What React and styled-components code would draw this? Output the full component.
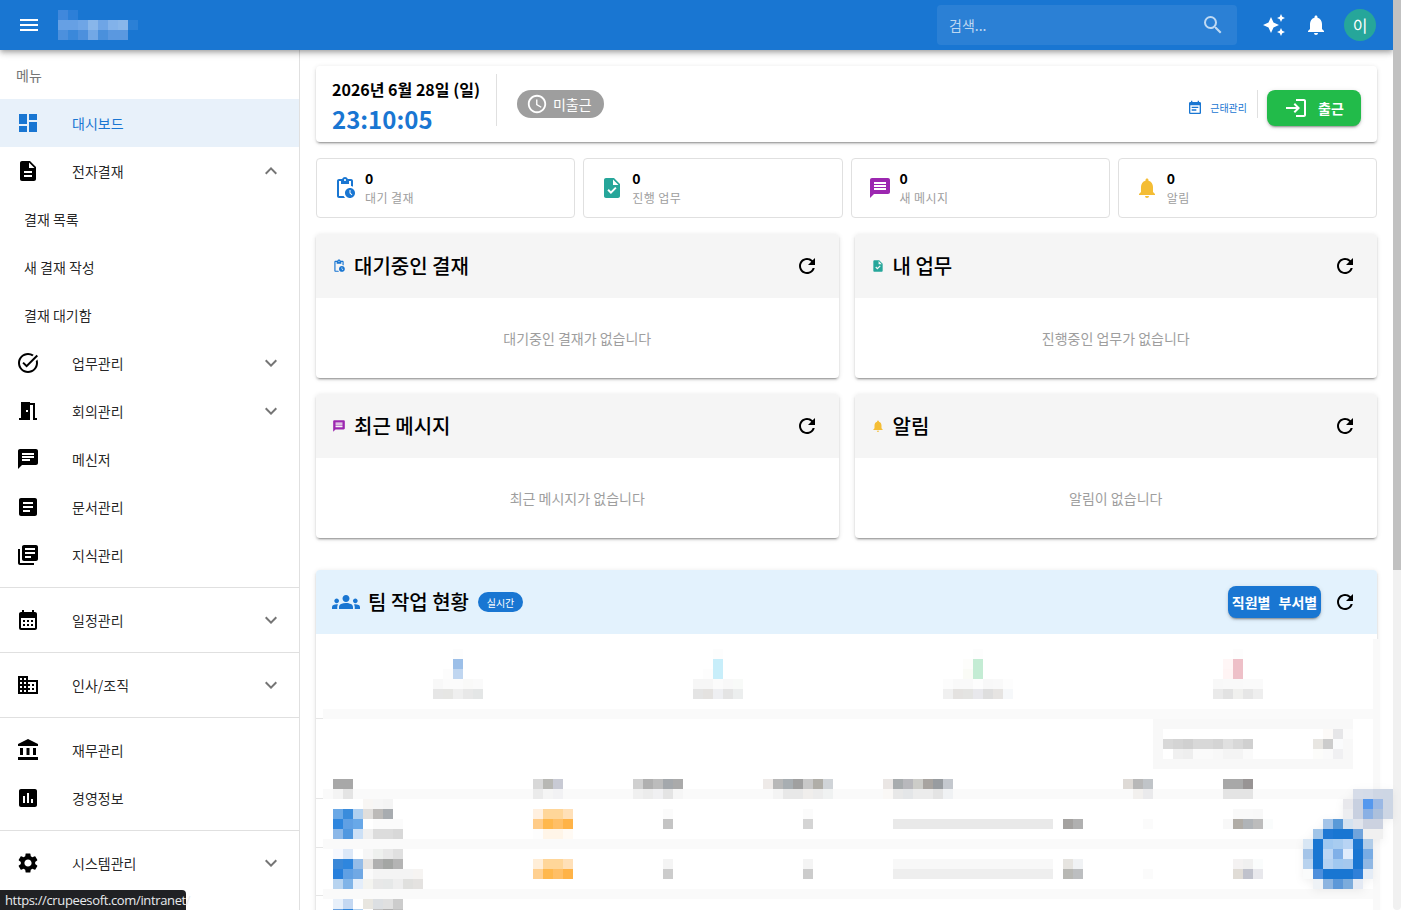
import React from "react";
import styled, { createGlobalStyle } from "styled-components";
import {
  MdMenu, MdDashboard, MdDescription, MdExpandLess, MdExpandMore, MdSearch, MdAutoAwesome,
  MdNotifications, MdLogin, MdEventNote, MdAccessTime, MdPendingActions, MdTask, MdMessage,
  MdRefresh, MdGroups, MdOutlineTaskAlt, MdMeetingRoom, MdChat, MdArticle, MdLibraryBooks,
  MdCalendarMonth, MdBusiness, MdAccountBalance, MdAssessment, MdSettings,
} from "react-icons/md";

const Global = createGlobalStyle`
  html, body { margin: 0; height: 100%; overflow: hidden; background: #fff; }
  body { font-family: "Noto Sans CJK KR", "Noto Sans", sans-serif; color: rgba(0,0,0,.87); }
  #root { height: 100vh; }
  * { box-sizing: border-box; }
`;

const Root = styled.div`display: flex; height: 100vh; position: relative; overflow: hidden;`;
const Page = styled.div`flex: 1; min-width: 0; display: flex; flex-direction: column; height: 100%; overflow: hidden;`;
const Track = styled.div`width: 8px; flex: none; background: #f1f1f1; border-radius: 0 0 4px 4px;`;
const Thumb = styled.div`height: 570px; background: #c1c1c1;`;

const Topbar = styled.header`
  height: 50px; flex: none; background: #1976d2; color: #fff; display: flex; align-items: center;
  padding: 0 17px; position: relative; z-index: 2;
  box-shadow: 0 2px 4px -1px rgba(0,0,0,.2), 0 4px 5px 0 rgba(0,0,0,.14), 0 1px 10px 0 rgba(0,0,0,.12);
`;
const LogoSlot = styled.div`margin-left: 17px; height: 30px; align-self: flex-start; margin-top: 10px;`;
const Search = styled.div`
  margin-left: auto; width: 300px; height: 40px; border-radius: 4px; background: rgba(255,255,255,.08);
  display: flex; align-items: center; justify-content: space-between; padding: 0 12px;
  font-size: 14px; color: rgba(255,255,255,.7);
`;
const TopActions = styled.div`display: flex; align-items: center; gap: 18px; margin-left: 25px;`;
const Avatar = styled.div`
  width: 32px; height: 32px; border-radius: 50%; background: #26a69a; color: #fff; margin-left: -2px;
  display: flex; align-items: center; justify-content: center; font-size: 16px;
`;

const Body = styled.div`flex: 1; display: flex; min-height: 0;`;
const Sidebar = styled.nav`width: 300px; flex: none; border-right: 1px solid #e0e0e0; background: #fff;`;
const SubHeader = styled.div`height: 49px; padding: 0 16px; display: flex; align-items: center; font-size: 14px; color: #757575;`;
const NavRow = styled.div`
  height: 48px; display: flex; align-items: center; padding: 0 16px 0 ${p => (p.$sub ? 24 : 16)}px; font-size: 14px;
  background: ${p => (p.$active ? "#e8f1fa" : "transparent")};
  color: ${p => (p.$active ? "#1976d2" : "rgba(0,0,0,.87)")};
`;
const NavIcon = styled.span`width: 56px; display: flex; font-size: 24px; color: ${p => (p.$active ? "#1976d2" : "#000")};`;
const NavLabel = styled.span`flex: 1;`;
const Chevron = styled.span`display: flex; font-size: 24px; color: #757575;`;
const NavDivider = styled.hr`margin: 8px 0; border: 0; border-top: 1px solid #e0e0e0;`;

const Main = styled.main`flex: 1; min-width: 0; padding: 16px; display: flex; flex-direction: column; gap: 16px;`;
const elevated = `box-shadow: 0 3px 1px -2px rgba(0,0,0,.2), 0 2px 2px 0 rgba(0,0,0,.14), 0 1px 5px 0 rgba(0,0,0,.12);`;

const ClockCard = styled.section`
  height: 76px; flex: none; border-radius: 4px; background: #fff; ${elevated}
  display: flex; align-items: flex-start; padding: 8px 16px 0;
`;
const DateBlock = styled.div`margin-top: 3px; margin-right: 16px;`;
const DateText = styled.div`font-size: 16px; line-height: 24px; font-weight: 700; color: #000;`;
const TimeText = styled.div`font-size: 24px; line-height: 36px; font-weight: 700; color: #1976d2;`;
const VDivider = styled.div`width: 1px; background: #e0e0e0; height: ${p => p.$h}px;`;
const StatusChip = styled.div`
  margin: 16px 0 0 20px; height: 28px; border-radius: 14px; background: #9e9e9e; color: #fff;
  display: flex; align-items: center; gap: 5px; padding: 0 12px 0 9px; font-size: 14px;
`;
const ClockRight = styled.div`margin: 16px 0 0 auto; display: flex; align-items: flex-start; gap: 9px;`;
const AttendLink = styled.div`
  height: 28px; display: flex; align-items: center; gap: 7px; color: #1976d2; font-size: 10px; margin-right: 1px; padding-top: 7px;
`;
const CheckIn = styled.div`
  width: 94px; height: 36px; border-radius: 8px; background: #22bb4a; color: #fff; font-size: 14px; font-weight: 700;
  display: flex; align-items: center; justify-content: center; gap: 10px; ${elevated}
`;

const StatGrid = styled.div`display: grid; grid-template-columns: repeat(4, 1fr); gap: 8px;`;
const StatCard = styled.div`
  height: 60px; border: 1px solid #e0e0e0; border-radius: 4px; background: #fff;
  display: flex; align-items: center; gap: 8px; padding: 0 16px;
`;
const StatIcon = styled.span`display: flex; font-size: 24px; color: ${p => p.$c};`;
const StatValue = styled.div`font-size: 14px; line-height: 20px; font-weight: 700; color: #000; letter-spacing: .1px;`;
const StatLabel = styled.div`font-size: 12px; line-height: 20px; color: #9e9e9e; letter-spacing: .4px;`;

const CardGrid = styled.div`display: grid; grid-template-columns: 1fr 1fr; gap: 16px;`;
const Card = styled.section`background: #fff; border-radius: 4px; ${elevated}`;
const CardHead = styled.div`
  height: 64px; padding: 0 20px 0 16px; display: flex; align-items: center; gap: 8px;
  background: ${p => p.$bg || "#f5f5f5"}; border-radius: 4px 4px 0 0; font-size: 20px; font-weight: 500; color: #000;
`;
const HeadTitle = styled.span`line-height: 1;`;
const HeadIcon = styled.span`display: flex; font-size: ${p => p.$s || 14}px; color: ${p => p.$c};`;
const HeadEnd = styled.span`margin-left: auto; display: flex; align-items: center; gap: 12px; font-size: 24px; color: #000;`;
const Empty = styled.div`
  height: ${p => p.$h}px; display: flex; align-items: center; justify-content: center; font-size: 14px; color: #9e9e9e;
`;

const TeamCard = styled(Card)`position: relative; margin-top: 16px; flex: none;`;
const LiveChip = styled.span`
  height: 20px; width: 45px; border-radius: 10px; background: #1976d2; color: #fff; font-size: 10px; font-weight: 400;
  display: flex; align-items: center; justify-content: center; margin-left: 1px;
`;
const ViewToggle = styled.div`
  height: 32px; width: 93px; border-radius: 8px; background: #1976d2; color: #fff; font-size: 14px; font-weight: 700;
  display: flex; align-items: center; justify-content: center; gap: 8px; white-space: nowrap; ${elevated}
`;
const EdgeStrip = styled.div`position: absolute; top: 69px; bottom: 0; right: -3px; width: 7px; background: #f9f9f9;`;
const TeamStats = styled.div`display: grid; grid-template-columns: repeat(4, 260px); padding: 15px 0 0 12px; height: 75px;`;
const TeamStat = styled.div`display: flex; justify-content: center;`;
const Band = styled.div`
  position: relative; height: ${p => p.$h}px; margin: 0 4px 0 7px; padding-left: 10px;
  background: linear-gradient(to top, #fafafa ${p => p.$band}px, transparent ${p => p.$band}px);
  &::before { content: ""; position: absolute; left: -7px; width: 7px; bottom: ${p => p.$tick}px; height: 1px; background: #e6e6e6; }
`;
const TableRow = styled(Band)`display: grid; grid-template-columns: 200px 100px 130px 120px 240px 100px 1fr; align-content: start;`;
const FilterRow = styled.div`height: 60px; display: flex; justify-content: flex-end; padding-right: 24px;`;

const Float = styled.div`position: absolute; left: 1303px; top: 789px; filter: drop-shadow(0 2px 4px rgba(0,0,0,.06));`;
const StatusBubble = styled.div`
  position: absolute; left: 0; bottom: 0; height: 20px; width: 186px; background: #202124; color: #e8eaed;
  border-radius: 0 4px 0 0; padding-left: 5px; font: 13px/20px "Open Sans", "Liberation Sans", sans-serif; letter-spacing: -.36px; white-space: nowrap; z-index: 3;
`;
const MosaicSvg = styled.svg`display: block; flex: none;`;

/* the reference shows these regions as a 10px mosaic: each cell is a colour */
const Mosaic = ({ rows }) => {
  const w = Math.max(...rows.map(r => r.length)) * 10;
  return (
    <MosaicSvg width={w} height={rows.length * 10} shapeRendering="crispEdges">
      {rows.flatMap((r, y) => r.map((c, x) => c && <rect key={x + "-" + y} x={x * 10} y={y * 10} width="10" height="10" fill={"#" + c} />))}
    </MosaicSvg>
  );
};
const _ = null;
const rep = (c, n) => Array(n).fill(c);

const LOGO = [
  ["4088dc", "2c7fd8"],
  ["66a0e4", "66a0e4", "6ea5e6", "88b6ea", "6ea5e6", "82b2ea", "88b6ea", "2b80d6"],
  ["4c90dd", "3a88da", "4c90dd", "72a8e6", "4a90dc", "5a98e0", "5a98e0"],
];
const S = [
  [[_,_,"fdfdfd"],[_,_,"9cbfe8"],[_,"fcfcfc","c0d6f0"],["f8f8f8","fbfbfb","fbfbfb","f9f9f8","fafafa"],["e6e6e6","e6e6e4","efefef","e8e8e8","e4e6e6"]],
  [[_,_,"fdfdfd"],[_,_,"c8eefa"],[_,"fdfdfd","c8eefa"],["f6f6f6","f6f6f6","fbfbfb","f8f8f8","f8faf8"],["e4e4e4","e4e2e0","eeeff2","e4e4e4","eceeee"]],
  [[_,_,_,"fdfdfd"],[_,_,"fdfdfb","c4ecd4"],[_,_,"fafbf6","c4ecd4"],["fcfcfc","f9f9f9","f9f9f9","fdfdfd","f8f8f8","f9f9f9","fdfdfd"],["f0f0f0","e4e2e0","e4e4e2","e8e8ec","dedede","e6e4e2","f6f8fa"]],
  [[_,_,"fdfdfd"],[_,"fff6f6","eec0c8"],[_,"fff4f4","eec0c8"],["f8f8f8","f9f9f9","f9f9f9","fafafa","fafafa"],["eaeaea","e2e2e2","f0f0ee","e6e6e6","eeeeee"]],
];
const FILTER = [
  rep("f8f8f8", 20),
  ["f8f8f8", ...rep(_, 16), "fcfaf8", "e6e6e8", "fbfbfb", "f8f8f8"].slice(0, 20),
  ["f8f8f8", "d8d8d8", "d4d4d4", "d0d0d0", "d8d8d8", "d8d8d8", "d4d4d4", "e0e0e0", "d8d8d8", "d0d0d0", ...rep(_, 6), "e8e6e2", "cccccc", "fafbfc", "f8f8f8"],
  ["f8f8f8", _, "f0f0f0", "eeeeee", "fafafa", "fafafa", "f8f8f8", "f4f4f4", "f4f4f4", "fafafa", ...rep(_, 6), "fcfcfa", "fafafa", "f0f0f2", "f8f8f8"],
  rep("f8f8f8", 20),
];
const HEAD = [
  [["a8a8a8","a8a8a8"],["f4f4f4","e4e4e4"]],
  [["d8d8d8","b8b8b4","c8cad4"],["ebebeb","f5f5f5","f2f2f4"]],
  [["d0d0d0","b0b0b0","bcbcbc","a4a8ac","aaaaaa"],["f0f0f0","ececec","f0f0f2","e4e4e4","f6f6f6"]],
  [["eeeae8","b8b8b8","a8aeb2","a0a0a0","c8c8c8","b0aea8","d0d4d8"],["fafafa","f4f4f4","e8e8e8","e8e8e8","f0eeec","ececec","f0f2f2"]],
  [["eae6e4","a8acae","b8b8bc","ccccc8","a8a4a0","989ca0","c4c8ce"],["faf8f6","e8e8e8","e4e6e8","ececec","ececec","e4e4e4","f0f2f4"]],
  [["dedad6","b8b8b8","c0c4c8"],[_,"f2f0ee","eaeaec"]],
  [["a8a8a8","a8a8a8","989494"],["e4e4e4","e4e4e4","e4e4e4"]],
];
const ROW1 = [
  [[_,_,_,"f8f6f4","f6f6f6","f4f4f4"],["6aa8e6","3a8cdc","b0d0f0","e0dedc","bcbab8","a8acb0"],["2e86de","60a0e4","68a8e8",_,"fbfbfb","fbfbfb","fbfbfb"],["8cb8e8","5098e0","cce0f6","f0f0f0","dcdcdc","dcdcdc","d8d8d8"]],
  [[],["fff0e0","ffd699","ffd699","ffe0b8"],["ffcc88","ffb84d","ffbf66","ffb347"],["fdfdfd","fff5e8","fff5e8","fffaf4"]],
  [[],[_,_,_,"fbfbfb"],[_,_,_,"c4c4c4"]],
  [[],[_,_,_,_,"fbfbfb"],[_,_,_,_,"d4d4d4"]],
  [[],[],[_,...rep("e9e9e9",16),_,"a4a2a0","b0b0b0"]],
  [[],[],[_,_,"fbfbfb"]],
  [[],[_,"f9f9f9","f9f9f9","f8f8f8"],["f8f8f8","b0aca6","b0b4b8","bcbcbc","fafcfc"]],
];
const ROW2 = [
  [["f6f8fe","dce8f8",_,"f6f6f6","eef0ee","e8e8e8","e0e0e0"],["3a88d8","2e86de","94bce8","e6e4e2","b0b0b0","a4a6a4","b4b4b4"],["2880dc","60a0e4","70a8e4","fafafa","f4f4f4","f4f4f4","f4f4f4","f4f4f4","f6f4f2"],["b8d4f0","80b4e8","e4eefa","f4f4f0","e8e8e8","e6e8e8","eeeeee","e0e0de","e4e2e0"]],
  [[],["ffeed8","ffd699","ffd699","ffe0b8"],["ffd090","ffb84d","ffbf66","ffb347"]],
  [[],[_,_,_,"f4f4f4"],[_,_,_,"cccccc"]],
  [[],[_,_,_,_,"f4f4f4"],[_,_,_,_,"cccccc"]],
  [[],[_,...rep("f8f8f8",16),_,"e6e4e0","f0f2f4"],[_,...rep("eeeeee",16),_,"b8b8b4","bcbec0"]],
  [[],[],[_,_,"fbfbfb"]],
  [[],[_,"f4f2f2","f0f0f0","fafcfc"],[_,"e0dcd6","c0c2cc","e8e8ec"]],
];
const ROW3 = [
  [["e8f0fa","c4d8f2",_,"e8e6e0","dcdfe2","e0e0e0","cccccc"],["68a0e0","2e86de","b0d0f0",_,"c0c0c0","b0b0b0","c0c0c0"]],
];
const FLOAT = [
  [_,_,_,_,_,"d6dce8","d4dbe8","ced6e4","cdd6e4"],
  [_,_,_,_,"e8e8ec","c8d0e0","5598ee","9ab8e4","cdd6e4"],
  [_,_,_,_,"ecedf0","c8d0e0","8ab0e4","acc0dc","cdd6e4"],
  [_,_,"a4c4e8","5a9ad8","d4e2f0","e0e4ec","ccd2e0","ccd2e0"],
  [_,"a0c4e8","1f78d4","1976d2","1976d2","70a4dc","f0f0f0","f0f0f0"],
  ["d8e6f4","1976d2","a0c8f0","a8ccf0","b8d4f4","1e78d2","b0cce8"],
  ["a4c4e8","1976d2","bcd6f4","80b0e8","e0ecfc","1976d2","78ace4"],
  ["b8d2ee","1976d2","b4d2f2","a0c8f0","a4c8ee","1976d2","90b8e4"],
  ["fafbfb","4f90dc","1976d2","1976d2","1976d2","3080d8","e4ecf6"],
  [_,"eef2f6","8cb4e0","5c98d8","7cacdc","e4eaf4"],
];

const NAV_A = [
  { icon: MdDashboard, label: "대시보드", active: true },
  { icon: MdDescription, label: "전자결재", open: true },
  { label: "결재 목록", sub: true },
  { label: "새 결재 작성", sub: true },
  { label: "결재 대기함", sub: true },
  { icon: MdOutlineTaskAlt, label: "업무관리", closed: true },
  { icon: MdMeetingRoom, label: "회의관리", closed: true },
  { icon: MdChat, label: "메신저" },
  { icon: MdArticle, label: "문서관리" },
  { icon: MdLibraryBooks, label: "지식관리" },
];
const NAV_GROUPS = [
  [{ icon: MdCalendarMonth, label: "일정관리", closed: true }],
  [{ icon: MdBusiness, label: "인사/조직", closed: true }],
  [{ icon: MdAccountBalance, label: "재무관리" }, { icon: MdAssessment, label: "경영정보" }],
  [{ icon: MdSettings, label: "시스템관리", closed: true }],
];
const NavItem = ({ icon: Icon, label, active, open, closed, sub }) => (
  <NavRow $active={active} $sub={sub}>
    {Icon && <NavIcon $active={active}><Icon /></NavIcon>}
    <NavLabel>{label}</NavLabel>
    {open && <Chevron><MdExpandLess /></Chevron>}
    {closed && <Chevron><MdExpandMore /></Chevron>}
  </NavRow>
);

const STATS = [
  { icon: MdPendingActions, c: "#1976d2", v: "0", l: "대기 결재" },
  { icon: MdTask, c: "#26a69a", v: "0", l: "진행 업무" },
  { icon: MdMessage, c: "#9c27b0", v: "0", l: "새 메시지" },
  { icon: MdNotifications, c: "#f4bd35", v: "0", l: "알림" },
];
const CARDS = [
  { icon: MdPendingActions, c: "#1976d2", t: "대기중인 결재", e: "대기중인 결재가 없습니다", h: 80 },
  { icon: MdTask, c: "#26a69a", t: "내 업무", e: "진행중인 업무가 없습니다", h: 80 },
  { icon: MdMessage, c: "#9c27b0", t: "최근 메시지", e: "최근 메시지가 없습니다", h: 80 },
  { icon: MdNotifications, c: "#f4bd35", t: "알림", e: "알림이 없습니다", h: 80 },
];

const Cells = ({ data }) => data.map((rows, i) => <Mosaic key={i} rows={rows.length ? rows : [[]]} />);

export default function App() {
  return (
    <Root>
      <Global />
      <Page>
        <Topbar>
          <MdMenu size={24} />
          <LogoSlot><Mosaic rows={LOGO} /></LogoSlot>
          <Search>검색...<MdSearch size={24} /></Search>
          <TopActions>
            <MdAutoAwesome size={24} />
            <MdNotifications size={24} />
            <Avatar>이</Avatar>
          </TopActions>
        </Topbar>
        <Body>
          <Sidebar>
            <SubHeader>메뉴</SubHeader>
            {NAV_A.map(n => <NavItem key={n.label} {...n} />)}
            {NAV_GROUPS.map((g, i) => (
              <React.Fragment key={i}>
                <NavDivider />
                {g.map(n => <NavItem key={n.label} {...n} />)}
              </React.Fragment>
            ))}
          </Sidebar>
          <Main>
            <ClockCard>
              <DateBlock>
                <DateText>2026년 6월 28일 (일)</DateText>
                <TimeText>23:10:05</TimeText>
              </DateBlock>
              <VDivider $h={52} />
              <StatusChip><MdAccessTime size={22} />미출근</StatusChip>
              <ClockRight>
                <AttendLink><MdEventNote size={16} />근태관리</AttendLink>
                <VDivider $h={28} />
                <CheckIn><MdLogin size={24} />출근</CheckIn>
              </ClockRight>
            </ClockCard>
            <StatGrid>
              {STATS.map(s => (
                <StatCard key={s.l}>
                  <StatIcon $c={s.c}><s.icon /></StatIcon>
                  <div>
                    <StatValue>{s.v}</StatValue>
                    <StatLabel>{s.l}</StatLabel>
                  </div>
                </StatCard>
              ))}
            </StatGrid>
            <CardGrid>
              {CARDS.map(c => (
                <Card key={c.t}>
                  <CardHead>
                    <HeadIcon $c={c.c}><c.icon /></HeadIcon>
                    <HeadTitle>{c.t}</HeadTitle>
                    <HeadEnd><MdRefresh /></HeadEnd>
                  </CardHead>
                  <Empty $h={c.h}>{c.e}</Empty>
                </Card>
              ))}
            </CardGrid>
            <TeamCard>
              <CardHead $bg="#e3f2fd">
                <HeadIcon $c="#1976d2" $s={28}><MdGroups /></HeadIcon>
                <HeadTitle>팀 작업 현황</HeadTitle>
                <LiveChip>실시간</LiveChip>
                <HeadEnd><ViewToggle><span>직원별</span><span>부서별</span></ViewToggle><MdRefresh /></HeadEnd>
              </CardHead>
              <TeamStats>
                {S.map((rows, i) => <TeamStat key={i}><Mosaic rows={rows} /></TeamStat>)}
              </TeamStats>
              <Band $h={10} $band={10} $tick={0} />
              <FilterRow><Mosaic rows={FILTER} /></FilterRow>
              <TableRow $h={20} $band={10} $tick={0}><Cells data={HEAD} /></TableRow>
              <TableRow $h={50} $band={10} $tick={1}><Cells data={ROW1} /></TableRow>
              <TableRow $h={50} $band={10} $tick={3}><Cells data={ROW2} /></TableRow>
              <TableRow $h={50} $band={10} $tick={3}><Cells data={ROW3} /></TableRow>
              <EdgeStrip />
            </TeamCard>
          </Main>
        </Body>
      </Page>
      <Track><Thumb /></Track>
      <Float><Mosaic rows={FLOAT} /></Float>
      <StatusBubble>https://crupeesoft.com/intranet/</StatusBubble>
    </Root>
  );
}
